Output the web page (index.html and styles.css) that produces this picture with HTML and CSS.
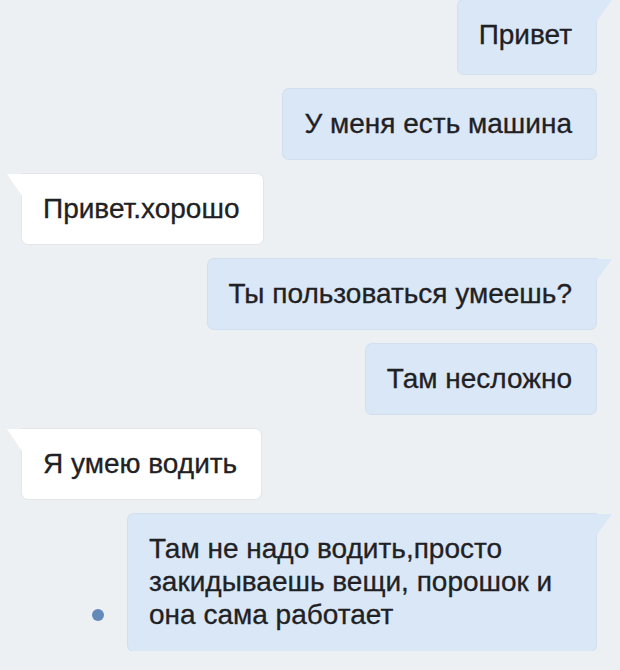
FILE: index.html
```html
<!DOCTYPE html>
<html lang="ru">
<head>
    <meta charset="UTF-8">
    <meta name="viewport" content="width=device-width, initial-scale=1.0">
    <title>Диалог</title>
    <link rel="stylesheet" href="styles.css">
</head>
<body>
    <div class="chat">
        <div class="msg out tail">Привет</div>
        <div class="msg out">У меня есть машина</div>
        <div class="msg in tail">Привет.хорошо</div>
        <div class="msg out tail">Ты пользоваться умеешь?</div>
        <div class="msg out">Там несложно</div>
        <div class="msg in tail">Я умею водить</div>
        <div class="row">
            <span class="unread"></span>
            <div class="msg out tail wide">Там не надо водить,просто закидываешь вещи, порошок и она сама работает</div>
        </div>
    </div>
</body>
</html>
```

FILE: styles.css
```css
*{
    margin: 0;
    padding: 0;
    box-sizing: border-box;
}

body{
    background-color: #edf0f3;
    font-family: "Liberation Sans", Arial, sans-serif;
    color: #1f2124;
}

.chat{
    display: flex;
    flex-direction: column;
    gap: 15px;
    padding: 0 24px 0 22px;
}

.msg{
    position: relative;
    font-size: 28px;
    line-height: 33px;
    padding: 18px 24px 19px 21px;
    border-radius: 6px;
    max-width: 470px;
    -webkit-text-stroke: 0.3px #1f2124;
}

.out{
    align-self: flex-end;
    background-color: #d9e7f6;
    box-shadow: 0 0 0 1px #d2dfee;
}

.in{
    align-self: flex-start;
    background-color: #fff;
    box-shadow: 0 0 0 1px #e3e7eb;
}

/* tails */
.tail.out{
    border-top-right-radius: 0;
}

.tail.out::after{
    content: "";
    position: absolute;
    top: 0;
    right: -16px;
    border-top: 22px solid #d9e7f6;
    border-right: 16px solid transparent;
}

.tail.in{
    border-top-left-radius: 0;
}

.tail.in::after{
    content: "";
    position: absolute;
    top: 0;
    left: -15px;
    border-top: 22px solid #fff;
    border-left: 15px solid transparent;
}

.chat > .msg:first-child{
    height: 74px;
}

.row{
    display: flex;
    align-items: flex-end;
    justify-content: flex-end;
    gap: 24px;
}

.unread{
    width: 12px;
    height: 12px;
    border-radius: 50%;
    background-color: #6389bb;
    margin-bottom: 30px;
}

.wide{
    width: 468px;
    max-width: none;
    padding-bottom: 20px;
}
```
